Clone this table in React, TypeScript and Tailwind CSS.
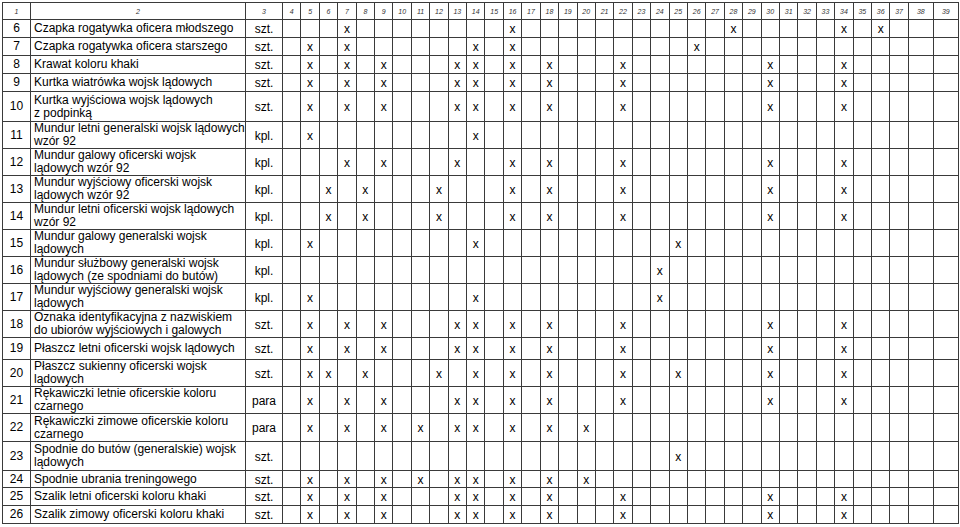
import React from "react";

interface Row {
  no: number;
  lines: string[];
  unit: string;
  marks: number[];
  h: string;
}

// column numbers 4..39 carry the "x" marks
const markCols = Array.from({ length: 36 }, (_, i) => i + 4);

const rows: Row[] = [
  { no: 6, lines: ["Czapka rogatywka oficera młodszego"], unit: "szt.", marks: [7, 16, 28, 34, 36], h: "h-[18px]" },
  { no: 7, lines: ["Czapka rogatywka oficera starszego"], unit: "szt.", marks: [5, 7, 14, 16, 26], h: "h-[18px]" },
  { no: 8, lines: ["Krawat koloru khaki"], unit: "szt.", marks: [5, 7, 9, 13, 14, 16, 18, 22, 30, 34], h: "h-[18px]" },
  { no: 9, lines: ["Kurtka wiatrówka wojsk lądowych"], unit: "szt.", marks: [5, 7, 9, 13, 14, 16, 18, 22, 30, 34], h: "h-[18px]" },
  { no: 10, lines: ["Kurtka wyjściowa wojsk lądowych", "z podpinką"], unit: "szt.", marks: [5, 7, 9, 13, 14, 16, 18, 22, 30, 34], h: "h-[30px]" },
  { no: 11, lines: ["Mundur letni generalski wojsk lądowych", "wzór 92"], unit: "kpl.", marks: [5, 14], h: "h-[27px]" },
  { no: 12, lines: ["Mundur galowy oficerski wojsk", "lądowych wzór 92"], unit: "kpl.", marks: [7, 9, 13, 16, 18, 22, 30, 34], h: "h-[27px]" },
  { no: 13, lines: ["Mundur wyjściowy oficerski wojsk", "lądowych wzór 92"], unit: "kpl.", marks: [6, 8, 12, 16, 18, 22, 30, 34], h: "h-[27px]" },
  { no: 14, lines: ["Mundur letni oficerski wojsk lądowych", "wzór 92"], unit: "kpl.", marks: [6, 8, 12, 16, 18, 22, 30, 34], h: "h-[27px]" },
  { no: 15, lines: ["Mundur galowy generalski wojsk", "lądowych"], unit: "kpl.", marks: [5, 14, 25], h: "h-[27px]" },
  { no: 16, lines: ["Mundur służbowy generalski wojsk", "lądowych (ze spodniami do butów)"], unit: "kpl.", marks: [24], h: "h-[27px]" },
  { no: 17, lines: ["Mundur wyjściowy generalski wojsk", "lądowych"], unit: "kpl.", marks: [5, 14, 24], h: "h-[27px]" },
  { no: 18, lines: ["Oznaka identyfikacyjna z nazwiskiem", "do ubiorów wyjściowych i galowych"], unit: "szt.", marks: [5, 7, 9, 13, 14, 16, 18, 22, 30, 34], h: "h-[27px]" },
  { no: 19, lines: ["Płaszcz letni oficerski wojsk lądowych"], unit: "szt.", marks: [5, 7, 9, 13, 14, 16, 18, 22, 30, 34], h: "h-[22px]" },
  { no: 20, lines: ["Płaszcz sukienny oficerski wojsk", "lądowych"], unit: "szt.", marks: [5, 6, 8, 12, 14, 16, 18, 22, 25, 30, 34], h: "h-[27px]" },
  { no: 21, lines: ["Rękawiczki letnie oficerskie koloru", "czarnego"], unit: "para", marks: [5, 7, 9, 13, 14, 16, 18, 22, 30, 34], h: "h-[27px]" },
  { no: 22, lines: ["Rękawiczki zimowe oficerskie koloru", "czarnego"], unit: "para", marks: [5, 7, 9, 11, 13, 14, 16, 18, 20], h: "h-[28px]" },
  { no: 23, lines: ["Spodnie do butów (generalskie) wojsk", "lądowych"], unit: "szt.", marks: [25], h: "h-[29px]" },
  { no: 24, lines: ["Spodnie ubrania treningowego"], unit: "szt.", marks: [5, 7, 9, 11, 13, 14, 16, 18, 20], h: "h-[17px]" },
  { no: 25, lines: ["Szalik letni oficerski koloru khaki"], unit: "szt.", marks: [5, 7, 9, 13, 14, 16, 18, 22, 30, 34], h: "h-[18px]" },
  { no: 26, lines: ["Szalik zimowy oficerski koloru khaki"], unit: "szt.", marks: [5, 7, 9, 13, 14, 16, 18, 22, 30, 34], h: "h-[18px]" },
];

const cell = "border border-[#3a3a3a] p-0";

export default function App() {
  return (
    <div className="w-[960px] h-[527px] overflow-hidden bg-white pt-[2px] pl-[2px] font-['Liberation_Sans',Arial,sans-serif] text-black">
      <table className="w-[956px] table-fixed border-collapse text-[12px] leading-[13px]">
        <colgroup>
          <col className="w-[28px]" />
          <col className="w-[215px]" />
          <col className="w-[37px]" />
          {markCols.map((c) =>
            c >= 38 ? <col key={c} className="w-[25px]" /> : <col key={c} className="w-[18.41px]" />
          )}
        </colgroup>
        <thead>
          <tr className="h-[17px]">
            {[1, 2, 3, ...markCols].map((n) => (
              <th key={n} className={`${cell} text-center align-middle text-[7px] font-normal italic text-[#333]`}>
                {n}
              </th>
            ))}
          </tr>
        </thead>
        <tbody>
          {rows.map((r) => (
            <tr key={r.no} className={r.h}>
              <td className={`${cell} text-center align-middle`}>{r.no}</td>
              <td className={`${cell} px-[3px] align-middle`}>
                {r.lines.map((l, i) => (
                  <div key={i} className="whitespace-nowrap">
                    {l}
                  </div>
                ))}
              </td>
              <td className={`${cell} text-center align-middle pt-[2px]`}>{r.unit}</td>
              {markCols.map((c) => (
                <td key={c} className={`${cell} text-center align-middle pt-[2px]`}>
                  {r.marks.includes(c) ? "x" : ""}
                </td>
              ))}
            </tr>
          ))}
        </tbody>
      </table>
    </div>
  );
}
